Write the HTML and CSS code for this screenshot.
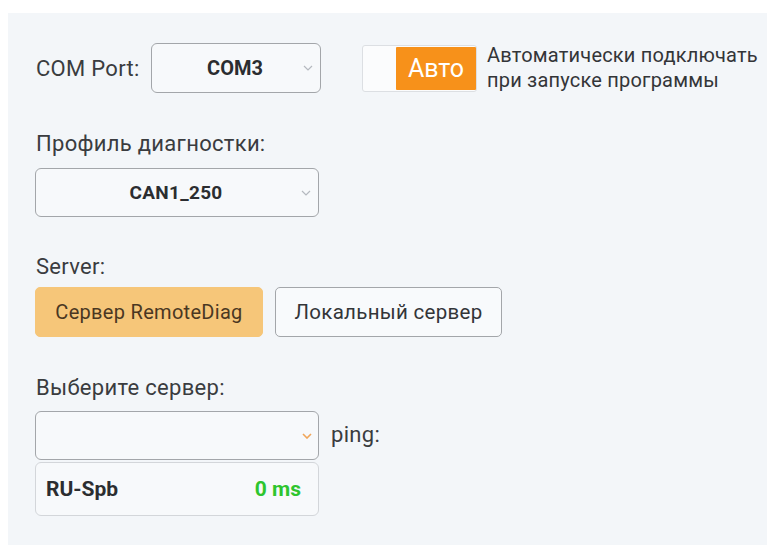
FILE: index.html
```html
<!DOCTYPE html>
<html lang="ru">
<head>
<meta charset="utf-8">
<title>Подключение</title>
<link rel="stylesheet" href="styles.css">
</head>
<body>
<div class="panel">
  <div class="row row-port">
    <span class="label label-port">COM Port:</span>
    <div class="select select-port">
      <span class="select-value">COM3</span>
      <svg class="chevron" width="10" height="6" viewBox="0 0 10 6"><polyline points="1,1 5,5 9,1" fill="none" stroke="#b5b9bf" stroke-width="1.2"/></svg>
    </div>
    <div class="toggle">
      <span class="toggle-off"></span>
      <span class="toggle-on">Авто</span>
    </div>
    <span class="toggle-text">Автоматически подключать<br>при запуске программы</span>
  </div>

  <div class="label label-block label-profile">Профиль диагностки:</div>
  <div class="select select-wide select-profile">
    <span class="select-value">CAN1_250</span>
    <svg class="chevron" width="10" height="6" viewBox="0 0 10 6"><polyline points="1,1 5,5 9,1" fill="none" stroke="#b5b9bf" stroke-width="1.2"/></svg>
  </div>

  <div class="label label-block label-server">Server:</div>
  <div class="btn-group">
    <button class="btn btn-active">Сервер RemoteDiag</button>
    <button class="btn btn-plain">Локальный сервер</button>
  </div>

  <div class="label label-block label-choose">Выберите сервер:</div>
  <div class="row row-ping">
    <div class="select select-wide select-open">
      <span class="select-value"></span>
      <svg class="chevron" width="10" height="6" viewBox="0 0 10 6"><polyline points="1,1 5,5 9,1" fill="none" stroke="#f0a65a" stroke-width="1.6"/></svg>
    </div>
    <span class="label ping">ping:</span>
  </div>
  <ul class="dropdown">
    <li class="option"><span class="option-name">RU-Spb</span><span class="option-ping">0 ms</span></li>
  </ul>
</div>
</body>
</html>
```

FILE: styles.css
```css
* { box-sizing: border-box; }

html, body {
  margin: 0;
  padding: 0;
  background: #ffffff;
}

body {
  font-family: Roboto, "Liberation Sans", sans-serif;
  color: #333538;
}

.panel {
  margin: 13px 0 0 8px;
  height: 532px;
  background: #f3f6f9;
  padding: 30px 0 0 27px;
}

.row {
  display: flex;
  align-items: center;
}

.label {
  font-size: 22px;
  letter-spacing: 0.3px;
  color: #3a3c3f;
}

.label-port {
  width: 116px;
  padding-left: 1px;
}

.label-block {
  padding-left: 1px;
  line-height: 26px;
}

.select {
  position: relative;
  display: flex;
  align-items: center;
  justify-content: center;
  height: 50px;
  border: 1.5px solid #a3a6aa;
  border-radius: 6px;
  background: #f7f9fb;
}

.select-value {
  font-size: 20px;
  font-weight: 700;
  color: #2b2d30;
  margin-right: 2px;
}

.select-profile .select-value {
  font-size: 19px;
  letter-spacing: 0.3px;
}

.chevron {
  position: absolute;
  right: 7px;
  top: 21px;
}

.select-port {
  width: 170px;
}

.select-wide {
  width: 284px;
  height: 49px;
}

.toggle {
  display: flex;
  margin-left: 41px;
  width: 115px;
  height: 47px;
  border: 1.5px solid #dcdfe3;
  border-radius: 3px;
  background: #fbfcfd;
  padding: 1px 0;
}

.toggle-off {
  width: 33px;
}

.toggle-on {
  flex: 1;
  background: #f7911a;
  color: #ffffff;
  font-size: 25px;
  display: flex;
  align-items: center;
  justify-content: center;
  border-radius: 1px;
}

.toggle-text {
  margin-left: 10px;
  margin-top: -1px;
  font-size: 20px;
  letter-spacing: 0.2px;
  line-height: 25px;
  color: #333538;
  white-space: nowrap;
}

.label-profile {
  margin-top: 38px;
}

.select-profile {
  margin-top: 11px;
}

.label-server {
  margin-top: 37px;
}

.btn-group {
  display: flex;
  gap: 12px;
  margin-top: 7px;
}

.btn {
  font-family: Roboto, "Liberation Sans", sans-serif;
  font-size: 20px;
  letter-spacing: 0.3px;
  color: #333538;
  height: 50px;
  border-radius: 5px;
  padding: 0;
}

.btn-active {
  width: 228px;
  background: #f6c679;
  border: 1px solid #f6c679;
  color: #4a3722;
}

.btn-plain {
  width: 227px;
  background: #f8fafc;
  border: 1.5px solid #a3a6aa;
  font-size: 20.5px;
}

.label-choose {
  margin-top: 38px;
}

.row-ping {
  margin-top: 10px;
}

.ping {
  margin-left: 12px;
  margin-top: -2px;
}

.select-open .chevron {
  right: 6px;
}

.dropdown {
  list-style: none;
  margin: 2px 0 0 0;
  padding: 0;
  width: 284px;
  border: 1px solid #d3d6da;
  border-radius: 6px;
  background: #f7f9fb;
}

.option {
  display: flex;
  justify-content: space-between;
  align-items: center;
  height: 52px;
  padding: 0 17px 0 10px;
  font-size: 21px;
  font-weight: 700;
}

.option-name {
  color: #2b2d30;
}

.option-ping {
  color: #2ec52e;
}
```
